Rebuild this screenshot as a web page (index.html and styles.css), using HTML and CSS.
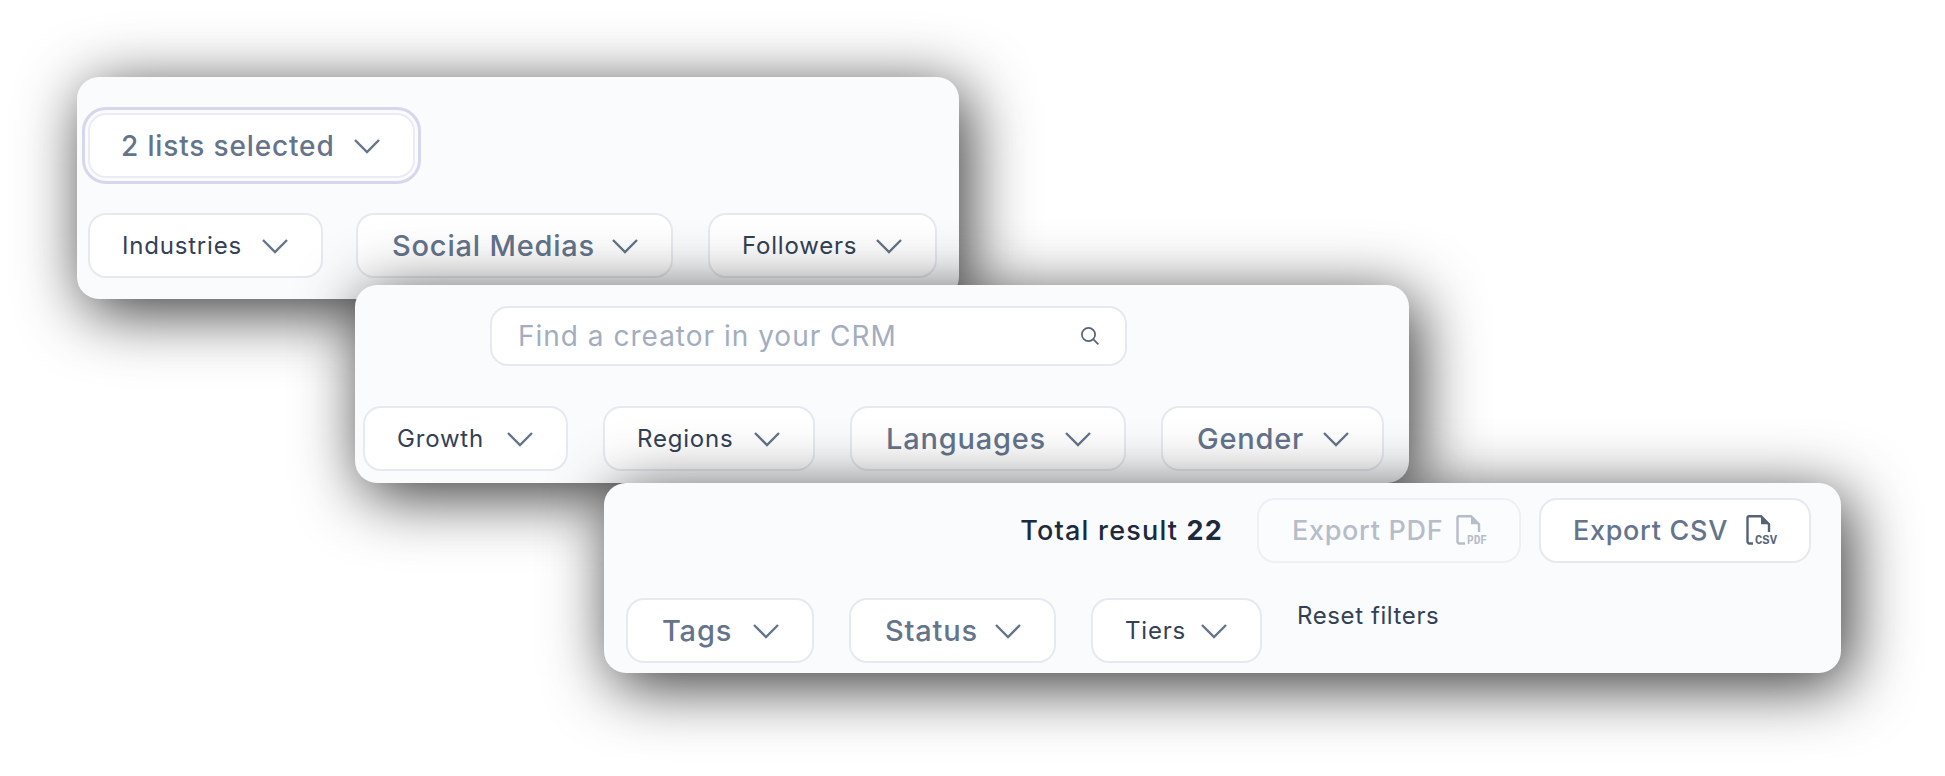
FILE: index.html
```html
<!DOCTYPE html>
<html lang="en">
<head>
  <meta charset="UTF-8" />
  <meta name="viewport" content="width=device-width, initial-scale=1.0"/>
  <title>Creator CRM filters</title>
  <link rel="stylesheet" href="styles.css">
</head>
<body>
  <svg class="icon-defs" width="0" height="0">
    <symbol id="chevron" viewBox="0 0 28 16">
      <path d="M2 2l12 12L26 2" fill="none" stroke="currentColor" stroke-width="2.4"/>
    </symbol>
  </svg>

  <!-- Lists card -->
  <section class="card card-lists">
    <div class="card-row">
      <div class="select-ring">
        <button class="filter filter-selected">2 lists selected <svg class="chevron"><use href="#chevron"/></svg></button>
      </div>
    </div>
    <div class="card-row filters">
      <button class="filter filter-small w-industries">Industries <svg class="chevron"><use href="#chevron"/></svg></button>
      <button class="filter filter-large w-social">Social Medias <svg class="chevron"><use href="#chevron"/></svg></button>
      <button class="filter filter-small w-followers">Followers <svg class="chevron"><use href="#chevron"/></svg></button>
    </div>
  </section>

  <!-- Search card -->
  <section class="card card-search">
    <div class="card-row">
      <div class="search-box">
        <span class="search-placeholder">Find a creator in your CRM</span>
        <svg class="search-icon" viewBox="0 0 20 20">
          <circle cx="8.5" cy="8.5" r="6.6" fill="none" stroke="currentColor" stroke-width="1.7"/>
          <path d="M13.4 13.4l5 5" fill="none" stroke="currentColor" stroke-width="1.7"/>
        </svg>
      </div>
    </div>
    <div class="card-row filters">
      <button class="filter filter-small w-growth">Growth <svg class="chevron"><use href="#chevron"/></svg></button>
      <button class="filter filter-small w-regions">Regions <svg class="chevron"><use href="#chevron"/></svg></button>
      <button class="filter filter-large w-languages">Languages <svg class="chevron"><use href="#chevron"/></svg></button>
      <button class="filter filter-large w-gender">Gender <svg class="chevron"><use href="#chevron"/></svg></button>
    </div>
  </section>

  <!-- Results card -->
  <section class="card card-results">
    <div class="card-row results-top">
      <span class="total">Total result <b>22</b></span>
      <button class="export export-pdf">Export PDF
        <svg class="file-icon" viewBox="0 0 32 32">
          <path d="M9 28.5H3.5Q1.5 28.5 1.5 26.5V3Q1.5 1.2 3 1.2H15L23 9.2V17" fill="none" stroke="currentColor" stroke-width="2.4"/>
          <path d="M15 1.2L23 9.2H15z" fill="currentColor"/>
          <text x="11" y="28.5" class="file-label" textLength="20" lengthAdjust="spacingAndGlyphs">PDF</text>
        </svg>
      </button>
      <button class="export export-csv">Export CSV
        <svg class="file-icon" viewBox="0 0 32 32">
          <path d="M7 28.5H3.5Q1.5 28.5 1.5 26.5V3Q1.5 1.2 3 1.2H15L23 9.2V17" fill="none" stroke="currentColor" stroke-width="2.4"/>
          <path d="M15 1.2L23 9.2H15z" fill="currentColor"/>
          <text x="9" y="28.5" class="file-label" textLength="22" lengthAdjust="spacingAndGlyphs">CSV</text>
        </svg>
      </button>
    </div>
    <div class="card-row filters">
      <button class="filter filter-large w-tags">Tags <svg class="chevron"><use href="#chevron"/></svg></button>
      <button class="filter filter-large w-status">Status <svg class="chevron"><use href="#chevron"/></svg></button>
      <button class="filter filter-small w-tiers">Tiers <svg class="chevron"><use href="#chevron"/></svg></button>
      <span class="reset">Reset filters</span>
    </div>
  </section>
</body>
</html>
```

FILE: styles.css
```css
:root {
  --card-bg: #f9fbfd;
  --border: #e6e9f0;
  --slate: #64748b;
  --dark: #334155;
}

* {
  margin: 0;
  padding: 0;
  box-sizing: border-box;
  font-family: 'Inter', 'Liberation Sans', sans-serif;
}

html, body {
  width: 1945px;
  height: 776px;
  overflow: hidden;
  background: #fff;
}

.icon-defs {
  position: absolute;
}

/* the three cards float over each other on a free canvas */
.card {
  position: absolute;
  display: flex;
  flex-direction: column;
  background: var(--card-bg);
  border-radius: 22px;
  box-shadow: 8px 12px 64px rgba(0,0,0,0.8);
}

.card-lists {
  left: 77px;
  top: 77px;
  width: 882px;
  height: 222px;
  padding: 36px 0 0 11px;
  gap: 35px;
}

.card-search {
  left: 355px;
  top: 285px;
  width: 1054px;
  height: 198px;
  padding: 21px 0 0 8px;
  gap: 40px;
}

.card-results {
  left: 604px;
  top: 483px;
  width: 1237px;
  height: 190px;
  padding: 15px 30px 0 22px;
  gap: 35px;
}

.card-row {
  display: flex;
}

.filters {
  gap: 35px;
}

button {
  background: #fff;
  border: 2px solid var(--border);
  border-radius: 18px;
  height: 65px;
  cursor: pointer;
}

.filter {
  display: flex;
  align-items: center;
  justify-content: space-between;
  padding: 0 32px 0 32px;
  white-space: nowrap;
}

.filter-small {
  font-size: 24px;
  letter-spacing: 0.8px;
  color: var(--dark);
}

.filter-large {
  padding-left: 34px;
  font-size: 29px;
  letter-spacing: 0.8px;
  font-weight: 500;
  color: var(--slate);
}

.filter-selected {
  width: 327px;
  padding-left: 31px;
  font-size: 28px;
  letter-spacing: 0.85px;
  font-weight: 500;
  color: var(--slate);
  border: 2px solid #eceaf6;
}

.select-ring {
  margin: -6px 0 -6px -6px;
  padding: 3px;
  border: 3px solid #d6d6ec;
  border-radius: 24px;
}

.w-industries { width: 235px; margin-right: -2px; }
.w-social { width: 317px; }
.w-followers { width: 229px; }
.w-growth { width: 205px; }
.w-regions { width: 212px; }
.w-languages { width: 276px; }
.w-gender { width: 223px; }
.w-tags { width: 188px; }
.w-status { width: 207px; }
.w-tiers { width: 171px; }

.chevron {
  width: 28px;
  height: 16px;
  flex-shrink: 0;
  color: var(--slate);
}

.search-box {
  display: flex;
  align-items: center;
  justify-content: space-between;
  width: 637px;
  height: 60px;
  margin-left: 127px;
  padding: 0 25px 0 26px;
  background: #fff;
  border: 2px solid var(--border);
  border-radius: 18px;
}

.search-placeholder {
  font-size: 28px;
  letter-spacing: 1px;
  color: #a3adc0;
}

.search-icon {
  width: 20px;
  height: 20px;
  color: #566377;
}

.results-top {
  align-items: center;
  justify-content: flex-end;
  gap: 18px;
}

.total {
  margin-right: 16px;
  font-size: 27px;
  letter-spacing: 1.2px;
  color: #1e293b;
  font-weight: 500;
}

.total b {
  font-weight: 700;
}

.export {
  display: flex;
  align-items: center;
  justify-content: space-between;
  font-size: 27px;
  letter-spacing: 0.7px;
  font-weight: 500;
  white-space: nowrap;
}

.export-pdf {
  width: 264px;
  padding: 0 31px 0 33px;
  color: #b6bdca;
  background: #fbfcfd;
  border-color: #eef0f4;
}

.export-csv {
  width: 272px;
  padding: 0 31px 0 32px;
  color: var(--slate);
}

.file-icon {
  width: 32px;
  height: 32px;
  flex-shrink: 0;
}

.file-label {
  font-family: 'Liberation Mono', monospace;
  font-size: 13px;
  font-weight: 700;
  letter-spacing: 0;
  fill: currentColor;
}

.export-csv .file-icon {
  color: #566377;
}

.reset {
  font-size: 24px;
  letter-spacing: 0.6px;
  line-height: 36px;
  color: var(--dark);
  white-space: nowrap;
}
```
